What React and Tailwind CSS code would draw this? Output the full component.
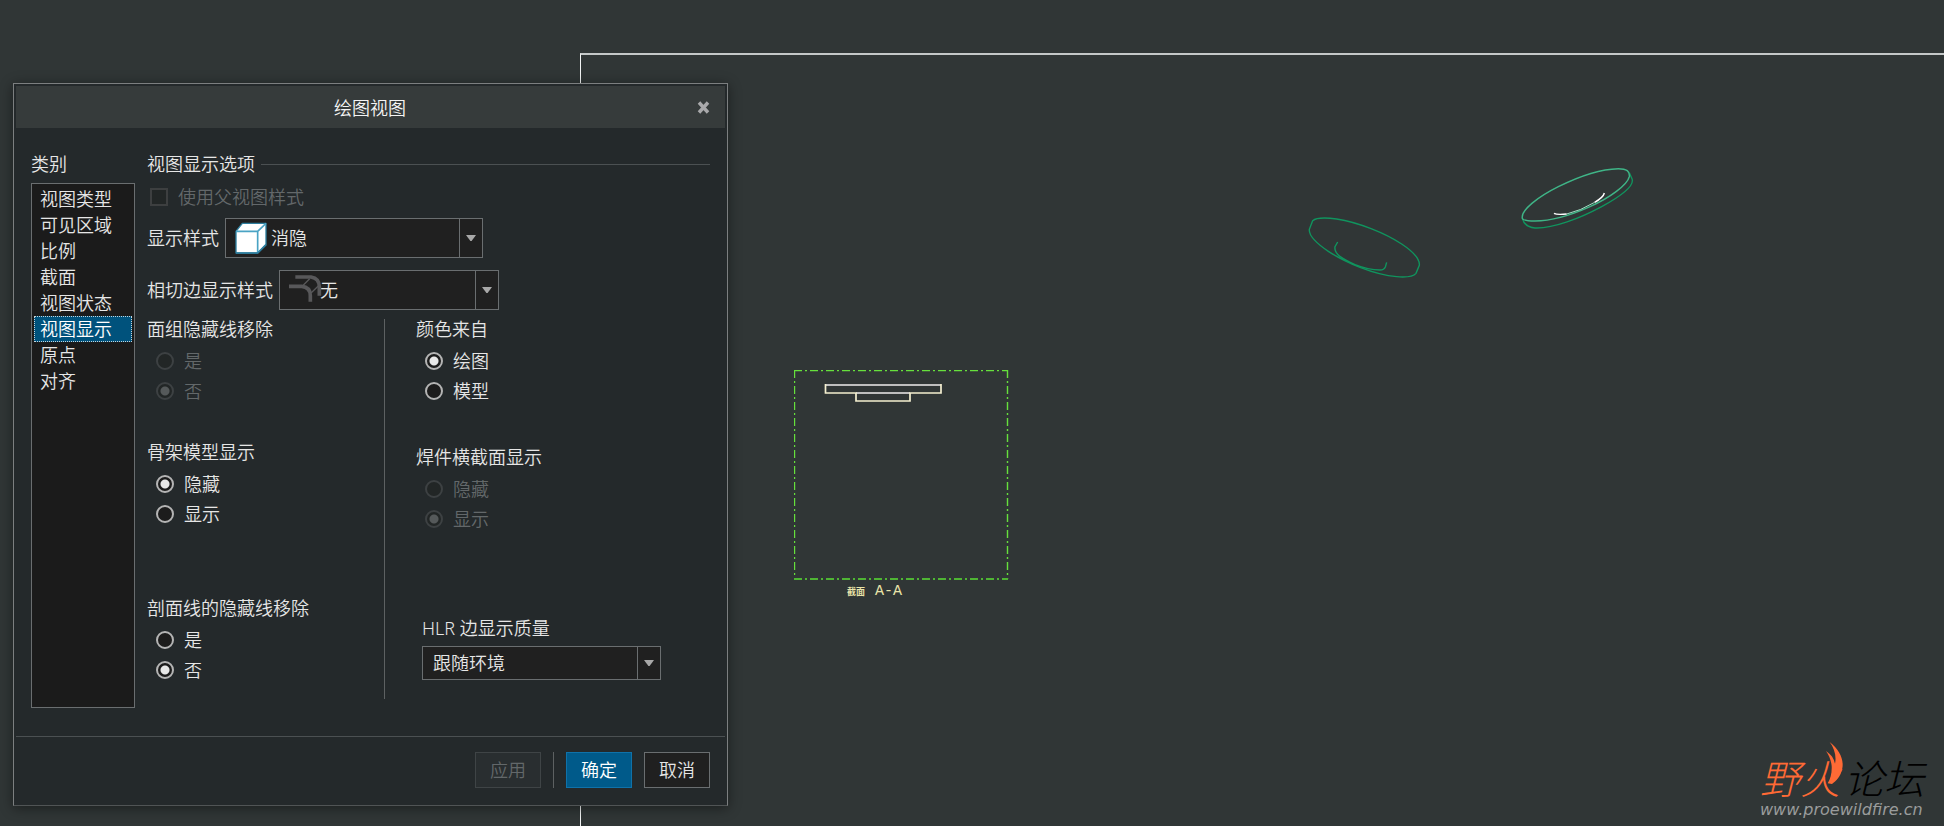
import React, { useState } from "react";

const categories = ["视图类型", "可见区域", "比例", "截面", "视图状态", "视图显示", "原点", "对齐"];

function Combo({ id, value, options, icon, size, pad }) {
  return (
    <div className={`grid border border-[#6a6e70] bg-[#202020] ${size}`}>
      <select
        id={id}
        defaultValue={value}
        className={`col-start-1 row-start-1 w-full h-full appearance-none bg-transparent text-[#e6e6e6] outline-none ${pad}`}
      >
        {options.map((o) => (
          <option key={o} className="bg-[#202020]">{o}</option>
        ))}
      </select>
      {icon && (
        <span className="col-start-1 row-start-1 self-center justify-self-start pl-[9px] pointer-events-none">{icon}</span>
      )}
      <span className="col-start-1 row-start-1 justify-self-end w-[23px] h-full border-l border-[#6a6e70] flex items-center justify-center pointer-events-none">
        <svg width="10" height="6" viewBox="0 0 10 6" aria-hidden="true">
          <path d="M0 0H10L5.6 6H4.4Z" fill="#a8a8a8" />
        </svg>
      </span>
    </div>
  );
}

function CubeIcon() {
  return (
    <svg width="32" height="32" viewBox="0 0 96 96" aria-hidden="true">
      <path d="M3 28L22 4H93V68L68 93H3Z" fill="#fff" stroke="#2f7f9f" strokeWidth="4" strokeLinejoin="round" />
      <path d="M3 28H68L93 4M68 28V93" fill="none" stroke="#4aa3c4" strokeWidth="5" />
      <path d="M3 93H68L93 68" fill="none" stroke="#2f7f9f" strokeWidth="5" />
    </svg>
  );
}

function TangentIcon() {
  return (
    <svg width="33" height="28" viewBox="0 0 99 84" className="mb-[3px]" aria-hidden="true">
      <g fill="none" stroke="#58585a">
        <path d="M19 6H66Q91 10 91 36V62" strokeWidth="11" />
        <path d="M0 34H38Q64 36 64 62V80" strokeWidth="11" />
        <path d="M41 32L62 11M66 54L87 34" strokeWidth="4" />
      </g>
    </svg>
  );
}

function Radio({ name, label, checked, disabled }) {
  return (
    <label className={`flex items-center h-[30px] gap-[10px] ${disabled ? "text-[#63686a]" : "text-[#e6e6e6]"}`}>
      <input
        type="radio"
        name={name}
        defaultChecked={checked}
        disabled={disabled}
        className="appearance-none size-[18px] shrink-0 rounded-full border-2 border-[#b4b4b4] bg-[#1c1c1c] checked:bg-[radial-gradient(circle,#e8e8e8_4px,#1c1c1c_5px)] disabled:border-[#3d4143] disabled:bg-[#222626] disabled:checked:bg-[radial-gradient(circle,#55595a_4px,#222626_5px)]"
      />
      {label}
    </label>
  );
}

function RadioGroup({ title, name, options, selected, disabled, className }) {
  return (
    <fieldset className={className}>
      <legend className="h-6 leading-6">{title}</legend>
      <div className="pt-[5px] pl-[9px]">
        {options.map((o) => (
          <Radio key={o} name={name} label={o} checked={o === selected} disabled={disabled} />
        ))}
      </div>
    </fieldset>
  );
}

function ViewDialog() {
  const [active, setActive] = useState("视图显示");
  return (
    <section
      role="dialog"
      aria-labelledby="dialog-title"
      className="relative z-10 w-[715px] border border-[#7c7f80] border-b-[#505455] bg-[#24292b] p-0.5 shadow-[0_2px_12px_rgba(0,0,0,0.45)]"
    >
      <header className="grid grid-cols-[1fr_auto_1fr] items-center h-[42px] bg-[#363b3b] pr-[15px]">
        <h1 id="dialog-title" className="col-start-2 pl-[14px] pt-0.5 text-[#f4f4f4]">绘图视图</h1>
        <button type="button" aria-label="关闭" className="justify-self-end">
          <svg width="13" height="13" viewBox="0 0 13 13" aria-hidden="true">
            <path d="M2 1.5L11 11.5M11 1.5L2 11.5" stroke="#a9a9ab" strokeWidth="3.4" />
          </svg>
        </button>
      </header>

      <div className="flex gap-3 px-[15px] pt-6 pb-7">
        <div className="w-[104px] flex flex-col">
          <h2 id="cat" className="h-6 leading-6 mb-[7px]">类别</h2>
          <ul aria-labelledby="cat" className="h-[525px] border border-[#6a6e70] bg-[#1b1b1b] p-0.5">
            {categories.map((c) => (
              <li key={c}>
                <button
                  type="button"
                  onClick={() => setActive(c)}
                  className={`block w-full h-[26px] leading-6 pl-[5px] text-left border ${
                    c === active ? "bg-[#00527c] border-dotted border-[#c8d4da] text-white" : "border-transparent"
                  }`}
                >
                  {c}
                </button>
              </li>
            ))}
          </ul>
        </div>

        <div className="flex-1">
          <div className="flex items-center gap-[6px] h-6">
            <h2>视图显示选项</h2>
            <hr className="flex-1 border-[#4b5052]" />
          </div>
          <label className="flex items-center gap-[10px] h-6 mt-[9px] pl-[3px] text-[#63686a]">
            <input type="checkbox" disabled className="appearance-none size-[18px] border-2 border-[#3d3f40] bg-[#222626]" />
            使用父视图样式
          </label>
          <div className="flex items-center gap-[6px] mt-[9px]">
            <label htmlFor="style">显示样式</label>
            <Combo id="style" value="消隐" options={["消隐", "线框", "着色"]} icon={<CubeIcon />} size="w-[258px] h-10" pad="pl-[45px]" />
          </div>
          <div className="flex items-center gap-[6px] mt-3">
            <label htmlFor="tangent">相切边显示样式</label>
            <Combo id="tangent" value="无" options={["无", "实线", "灰色"]} icon={<TangentIcon />} size="w-[220px] h-10" pad="pl-10" />
          </div>

          <div className="flex mt-[7px]">
            <div className="w-[238px] border-r border-[#5d6162] mt-[2px] h-[380px]">
              <div className="-mt-[2px]">
                <RadioGroup title="面组隐藏线移除" name="quilt" options={["是", "否"]} selected="否" disabled />
                <RadioGroup title="骨架模型显示" name="skeleton" options={["隐藏", "显示"]} selected="隐藏" className="mt-[34px]" />
                <RadioGroup title="剖面线的隐藏线移除" name="hatch" options={["是", "否"]} selected="否" className="mt-[67px]" />
              </div>
            </div>
            <div className="pl-[31px]">
              <RadioGroup title="颜色来自" name="color" options={["绘图", "模型"]} selected="绘图" />
              <RadioGroup title="焊件横截面显示" name="weld" options={["隐藏", "显示"]} selected="显示" disabled className="mt-[39px]" />
              <div className="pl-[6px] mt-[82px]">
                <label htmlFor="hlr" className="block h-6 leading-6 mb-[6px]">HLR 边显示质量</label>
                <Combo id="hlr" value="跟随环境" options={["跟随环境", "高", "低"]} size="w-[239px] h-[34px]" pad="pl-[10px]" />
              </div>
            </div>
          </div>
        </div>
      </div>

      <footer className="flex justify-end items-center gap-3 border-t border-[#4b5052] px-[15px] pt-[15px] pb-[15px]">
        <button type="button" disabled className="w-[66px] h-9 border border-[#3f4446] bg-[#292e30] text-[#63686a]">应用</button>
        <span className="w-px h-9 bg-[#5d6162]" />
        <button type="button" className="w-[66px] h-9 border border-[#0f72aa] bg-[#005a8a] text-white">确定</button>
        <button type="button" className="w-[66px] h-9 border border-[#6a6e70] bg-[#202020]">取消</button>
      </footer>
    </section>
  );
}

function TiltedDiscs() {
  return (
    <svg className="absolute left-[1290px] top-[150px]" width="360" height="140" viewBox="0 0 1080 420" fill="none" aria-hidden="true">
      <g stroke="#10945e" strokeWidth="4.2">
        <path d="M68 212C80 202 110 203 140 207C205 217 285 249 335 282C368 304 390 328 388 346L378 370C368 382 345 382 320 380C250 374 165 337 115 304C78 279 56 256 58 238Z" />
        <path d="M143 276L135 290C131 312 158 328 195 344C225 356 255 360 270 360C280 360 284 356 286 351L290 337" />
        <path d="M697 205Q704 232 735 234C790 236 870 205 935 170C990 140 1035 108 1026 86L1018 68" />
      </g>
      <path d="M697 205C692 180 745 140 805 110C865 80 935 57 985 56C1010 56 1020 64 1018 80C1012 105 960 143 900 170C840 197 780 213 735 213C712 213 699 212 697 205Z" stroke="#3fb587" strokeWidth="4.4" />
      <path d="M830 192Q872 182 914 157" stroke="#9fdcc2" strokeWidth="3" />
      <path d="M792 190Q800 195 830 192M943 129Q940 142 914 157" stroke="#fff" strokeWidth="4.4" />
    </svg>
  );
}

function SectionView() {
  return (
    <figure className="absolute left-[794px] top-[370px]">
      <svg width="215" height="210" viewBox="0 0 215 210" fill="none" aria-hidden="true">
        <g stroke="#66e03c" strokeDasharray="8 3 2 3">
          <path d="M0 .5H214M.5 0V209M213.5 0V209" strokeWidth="1.4" />
          <path d="M0 209H214" strokeWidth="2" stroke="#4fb534" />
        </g>
        <path d="M31 15H147M62 23H116" stroke="#bfbfbf" strokeWidth="2" />
        <path d="M31.5 14V23H62V31H116V23H147V14" stroke="#f4efd0" strokeWidth="1.7" />
      </svg>
      <figcaption className="flex items-center gap-[10px] h-5 mt-0.5 pl-[53px] text-[#e8e3a8]">
        <span className="text-[9px] font-bold">截面</span>
        <span className="font-['Liberation_Mono'] text-[15px]">A-A</span>
      </figcaption>
    </figure>
  );
}

function ForumLogo() {
  return (
    <a href="#forum" className="absolute right-5 bottom-2 flex flex-col">
      <span className="flex italic font-light text-[40px] leading-[46px]">
        <span className="relative text-[#ff6a35]">
          野火
          <svg className="absolute left-[66px] top-[-15px]" width="24" height="46" viewBox="250 30 72 138" aria-hidden="true">
            <path d="M261 33C290 55 304 85 299 112C294 138 280 150 268 159L255 157C264 143 268 125 267 105C265 85 258 72 250 60C265 70 274 82 277 98C282 75 275 52 261 33Z" fill="#ff6a35" />
          </svg>
        </span>
        <span className="text-black pl-1">论坛</span>
      </span>
      <span className="font-['DejaVu_Sans'] italic font-normal text-[16px] leading-4 text-[#9a9c9c]">www.proewildfire.cn</span>
    </a>
  );
}

export default function App() {
  return (
    <main className="relative min-h-screen overflow-hidden bg-[#303636] pt-[83px] pb-5 pl-[13px] font-['Noto_Sans','Noto_Sans_CJK_SC',sans-serif] font-[350] text-[18px] leading-6 text-[#e6e6e6]">
      <div className="absolute left-[580px] right-0 top-[53px] bottom-0 border-l border-t-2 border-l-[#f2f4f4] border-t-[#c4c8c8]" />
      <SectionView />
      <TiltedDiscs />
      <ForumLogo />
      <ViewDialog />
    </main>
  );
}
